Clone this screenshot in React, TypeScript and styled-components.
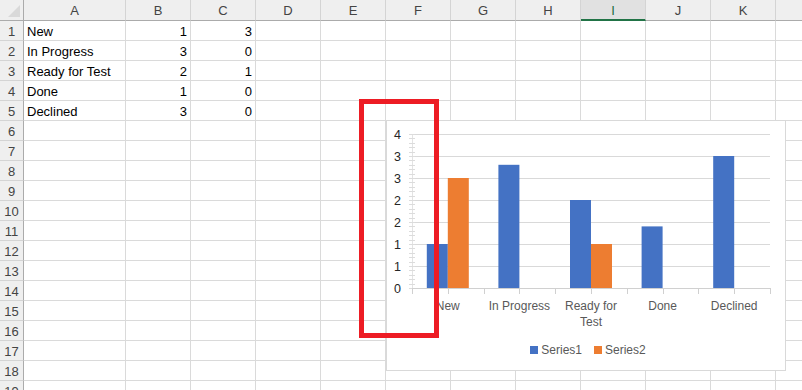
import React, { FC } from "react";
import styled, { createGlobalStyle } from "styled-components";

const GlobalStyle = createGlobalStyle`
  html, body {
    margin: 0;
    padding: 0;
    background: #ffffff;
    overflow: hidden;
  }
  * {
    box-sizing: border-box;
  }
`;

const COLUMNS = ["A", "B", "C", "D", "E", "F", "G", "H", "I", "J", "K", "L"];
const SELECTED_COLUMN = "I";
const ROW_COUNT = 20;

const DATA: { label: string; b: number; c: number }[] = [
  { label: "New", b: 1, c: 3 },
  { label: "In Progress", b: 3, c: 0 },
  { label: "Ready for Test", b: 2, c: 1 },
  { label: "Done", b: 1, c: 0 },
  { label: "Declined", b: 3, c: 0 },
];

// plotted chart values (axis 0 - 3.5, step 0.5)
const SERIES1 = [1, 2.8, 2, 1.4, 3];
const SERIES2 = [2.5, 0, 1, 0, 0];
const CATEGORIES: string[][] = [
  ["New"],
  ["In Progress"],
  ["Ready for", "Test"],
  ["Done"],
  ["Declined"],
];

const Sheet = styled.div`
  position: relative;
  width: 802px;
  height: 390px;
  overflow: hidden;
  font-family: "Liberation Sans", Arial, sans-serif;
`;

const Grid = styled.div`
  display: grid;
  grid-template-columns: 24px 102px repeat(11, 65px);
  grid-template-rows: 21px repeat(${ROW_COUNT}, 20px);
`;

const Corner = styled.div`
  position: relative;
  background: #efefef;
  border-right: 1px solid #ababab;
  border-bottom: 1px solid #ababab;
  &::after {
    content: "";
    position: absolute;
    right: 3px;
    bottom: 3px;
    width: 0;
    height: 0;
    border-left: 12px solid transparent;
    border-bottom: 12px solid #d9d9d9;
  }
`;

const ColHeader = styled.div<{ $selected?: boolean }>`
  display: flex;
  align-items: center;
  justify-content: center;
  background: ${(p) => (p.$selected ? "#e1e1e1" : "#efefef")};
  color: ${(p) => (p.$selected ? "#1d6b3f" : "#444444")};
  font-size: 13px;
  border-right: 1px solid #d4d4d4;
  border-bottom: ${(p) => (p.$selected ? "2px solid #217346" : "1px solid #ababab")};
  padding-top: ${(p) => (p.$selected ? "1px" : "0")};
`;

const RowHeader = styled.div`
  display: flex;
  align-items: center;
  justify-content: center;
  background: #efefef;
  color: #444444;
  font-size: 13px;
  border-right: 1px solid #ababab;
  border-bottom: 1px solid #d4d4d4;
  padding-top: 1px;
`;

const Cell = styled.div<{ $align?: "left" | "right" }>`
  display: flex;
  align-items: center;
  justify-content: ${(p) => (p.$align === "right" ? "flex-end" : "flex-start")};
  padding: 1px 3px 0 3px;
  font-size: 13px;
  color: #000000;
  white-space: nowrap;
  overflow: visible;
  border-right: 1px solid #dadada;
  border-bottom: 1px solid #dadada;
`;

const ChartFrame = styled.div`
  position: absolute;
  left: 386px;
  top: 120px;
  width: 400px;
  height: 251px;
  background: #ffffff;
  border: 1px solid #d9d9d9;
  display: flex;
  flex-direction: column;
`;

const PlotSvg = styled.svg`
  display: block;
  font-family: "Liberation Sans", Arial, sans-serif;
`;

const Legend = styled.div`
  display: flex;
  justify-content: center;
  align-items: center;
  gap: 12px;
  height: 22px;
  padding-left: 4px;
  font-size: 12px;
  color: #595959;
`;

const LegendItem = styled.div`
  display: flex;
  align-items: center;
  gap: 3px;
`;

const Swatch = styled.span<{ $color: string }>`
  width: 8px;
  height: 8px;
  background: ${(p) => p.$color};
`;

const Highlight = styled.div`
  position: absolute;
  left: 359px;
  top: 99px;
  width: 80px;
  height: 239px;
  border: 5px solid #ed1c24;
  pointer-events: none;
`;

const BLUE = "#4472c4";
const ORANGE = "#ed7d31";
const ZERO_Y = 288;
const UNIT = 44;
const AXIS_LEFT = 412;
const AXIS_RIGHT = 770;
const CAT_WIDTH = (AXIS_RIGHT - AXIS_LEFT) / 5;
const BAR_W = 21;

const Chart: FC = () => {
  const gridValues = [0.5, 1, 1.5, 2, 2.5, 3, 3.5];
  const labelValues = [0, 0.5, 1, 1.5, 2, 2.5, 3, 3.5];
  const minorTicks: number[] = [];
  for (let v = 0; v <= 3.5001; v += 0.1) minorTicks.push(v);
  const majorTicks: number[] = [];
  for (let k = 0; k <= 10; k++) majorTicks.push(AXIS_LEFT + (k * CAT_WIDTH) / 2);

  return (
    <ChartFrame>
      <PlotSvg width={398} height={218} viewBox="387 121 398 218">
        {gridValues.map((v) => (
          <line
            key={v}
            x1={AXIS_LEFT}
            x2={AXIS_RIGHT}
            y1={ZERO_Y - v * UNIT + 0.5}
            y2={ZERO_Y - v * UNIT + 0.5}
            stroke="#d9d9d9"
            strokeWidth={1}
          />
        ))}
        <line x1={AXIS_LEFT + 0.5} x2={AXIS_LEFT + 0.5} y1={134} y2={ZERO_Y} stroke="#e3e3e3" />
        {minorTicks.map((v, i) => (
          <line
            key={i}
            x1={409}
            x2={415}
            y1={Math.round(ZERO_Y - v * UNIT) + 0.5}
            y2={Math.round(ZERO_Y - v * UNIT) + 0.5}
            stroke="#dcdcdc"
          />
        ))}
        {labelValues.map((v) => (
          <text
            key={v}
            x={401}
            y={ZERO_Y - v * UNIT + 4.5}
            textAnchor="end"
            fontSize={12.5}
            fill="#262626"
          >
            {Math.round(v + 0.0001)}
          </text>
        ))}
        {SERIES1.map((v, i) => {
          const c = AXIS_LEFT + CAT_WIDTH * (i + 0.5);
          return (
            <rect key={"s1" + i} x={c - BAR_W} y={ZERO_Y - v * UNIT} width={BAR_W} height={v * UNIT} fill={BLUE} />
          );
        })}
        {SERIES2.map((v, i) => {
          const c = AXIS_LEFT + CAT_WIDTH * (i + 0.5);
          return v > 0 ? (
            <rect key={"s2" + i} x={c} y={ZERO_Y - v * UNIT} width={BAR_W} height={v * UNIT} fill={ORANGE} />
          ) : null;
        })}
        <line x1={AXIS_LEFT} x2={AXIS_RIGHT} y1={ZERO_Y + 0.5} y2={ZERO_Y + 0.5} stroke="#d0d0d0" />
        {majorTicks.map((x, i) => (
          <line key={i} x1={Math.round(x) + 0.5} x2={Math.round(x) + 0.5} y1={ZERO_Y} y2={ZERO_Y + 6} stroke="#d0d0d0" />
        ))}
        {CATEGORIES.map((lines, i) => {
          const c = AXIS_LEFT + CAT_WIDTH * (i + 0.5);
          return (
            <text key={i} x={c} textAnchor="middle" fontSize={12} fill="#595959">
              {lines.map((t, j) => (
                <tspan key={j} x={c} y={310 + j * 16}>
                  {t}
                </tspan>
              ))}
            </text>
          );
        })}
      </PlotSvg>
      <Legend>
        <LegendItem>
          <Swatch $color={BLUE} />
          Series1
        </LegendItem>
        <LegendItem>
          <Swatch $color={ORANGE} />
          Series2
        </LegendItem>
      </Legend>
    </ChartFrame>
  );
};

const App: FC = () => {
  const rows = Array.from({ length: ROW_COUNT }, (_, i) => i + 1);
  return (
    <>
      <GlobalStyle />
      <Sheet>
        <Grid>
          <Corner />
          {COLUMNS.map((col) => (
            <ColHeader key={col} $selected={col === SELECTED_COLUMN}>
              {/* column L is scrolled past the window edge, its letter is not visible */}
              {col === "L" ? null : col}
            </ColHeader>
          ))}
          {rows.map((r) => {
            const record = DATA[r - 1];
            return (
              <React.Fragment key={r}>
                <RowHeader>{r}</RowHeader>
                {COLUMNS.map((col) => {
                  let content: React.ReactNode = null;
                  let align: "left" | "right" = "left";
                  if (record) {
                    if (col === "A") content = record.label;
                    if (col === "B") {
                      content = record.b;
                      align = "right";
                    }
                    if (col === "C") {
                      content = record.c;
                      align = "right";
                    }
                  }
                  return (
                    <Cell key={col} $align={align}>
                      {content}
                    </Cell>
                  );
                })}
              </React.Fragment>
            );
          })}
        </Grid>
        <Chart />
        <Highlight />
      </Sheet>
    </>
  );
};

export default App;
